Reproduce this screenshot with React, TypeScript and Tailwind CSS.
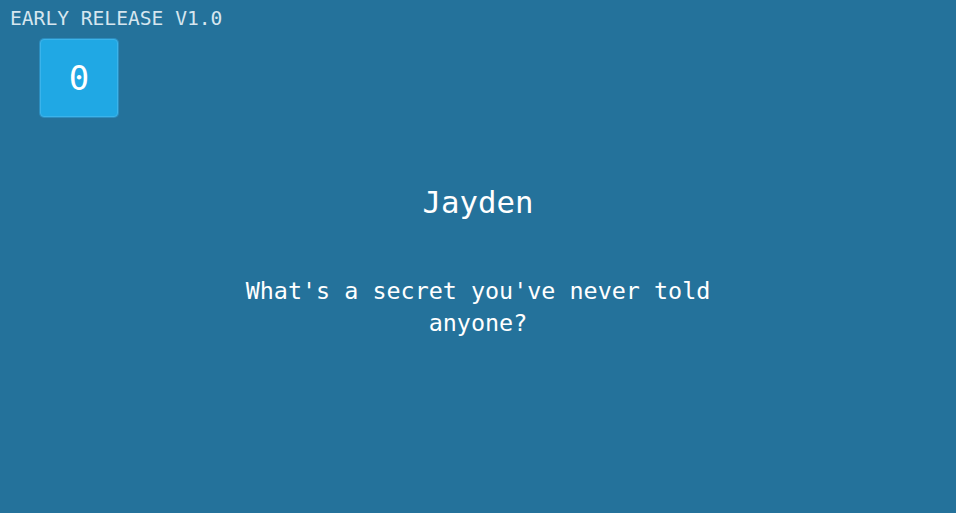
import React from 'react';

const mono = "font-['DejaVu_Sans_Mono','Liberation_Mono',monospace]";

const App: React.FC = () => {
    return (
        <div className={`w-full min-h-[513px] bg-[#24729b] text-white ${mono}`}>
            {/* Version tag + score box */}
            <div className="pl-[10px] pt-[8px]">
                <p className="text-[19.6px] leading-[22px] text-[#d6e6ef]">EARLY RELEASE V1.0</p>
                <div className="ml-[30px] mt-[9px] w-[78px] h-[78px] rounded-[4px] bg-[#20a8e4] border border-[#3bb3ea] shadow-[0_0_0_1px_#2b8dbf] flex items-center justify-center">
                    <span className="text-[34px] leading-none">0</span>
                </div>
            </div>

            {/* Card content */}
            <div className="flex flex-col items-center mt-[66px]">
                <h1 className="text-[30.7px] leading-[40px] font-medium">Jayden</h1>
                <p className="mt-[52px] max-w-[500px] text-center text-[23.4px] leading-[32px] font-medium">
                    What's a secret you've never told anyone?
                </p>
            </div>
        </div>
    );
};

export default App;
